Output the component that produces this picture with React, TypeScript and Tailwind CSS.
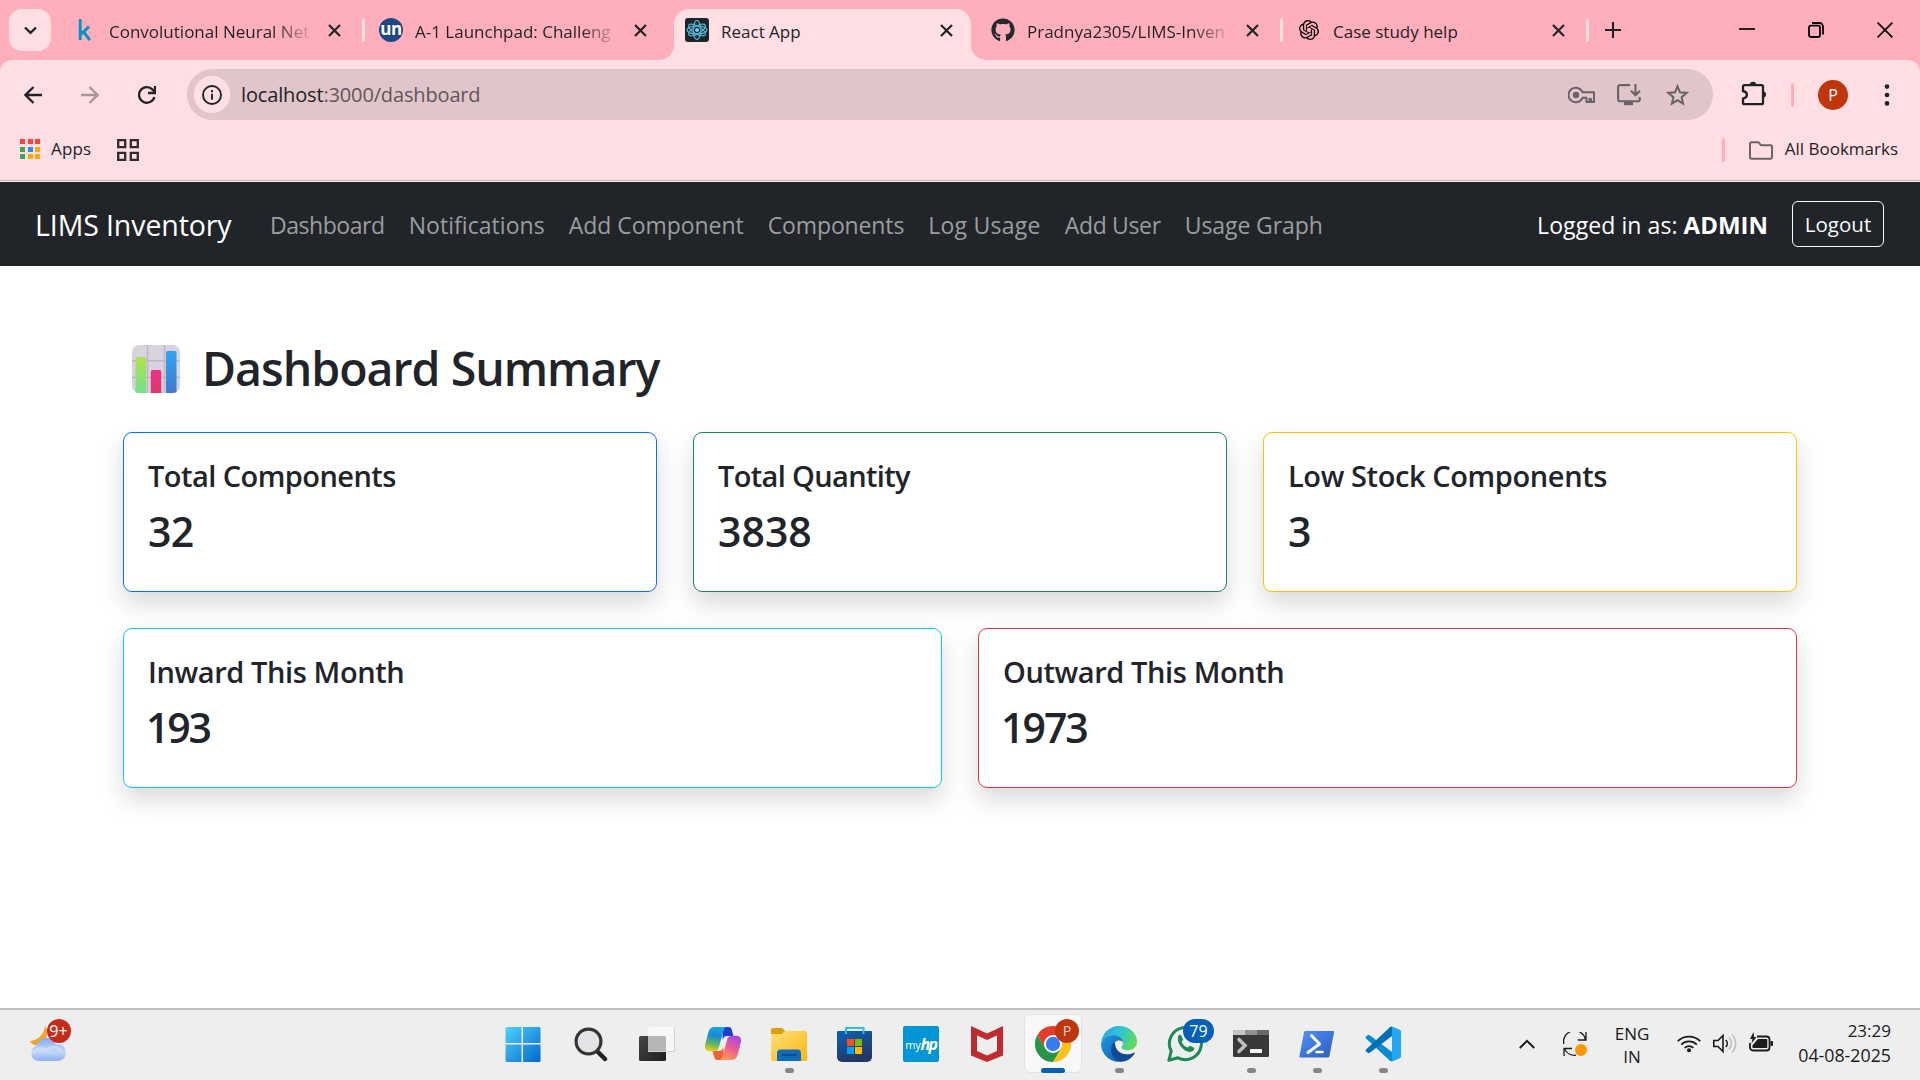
import React from "react";
import type { ReactNode } from "react";
import { FaGithub } from "react-icons/fa";
import { SiOpenai } from "react-icons/si";

/* ---------- Browser tabs ---------- */

function CloseIcon() {
  return (
    <svg className="h-[13px] w-[13px]" viewBox="0 0 13 13" stroke="#1f2326" strokeWidth="2.2">
      <path d="M1 1l11 11M12 1L1 12" />
    </svg>
  );
}

function KaggleIcon() {
  return (
    <svg className="h-6 w-6" viewBox="0 0 24 24" fill="none" stroke="#0a93c4" strokeWidth="3">
      <path d="M7.200 1v21M16 8.600l-7.600 7.200M10.400 13.600l6.400 8.400" />
    </svg>
  );
}

function UnIcon() {
  return (
    <span className="flex h-6 w-6 items-center justify-center rounded-full bg-[#1d4882] pb-[3px] font-['Open_Sans',sans-serif] text-[17px] leading-none font-bold tracking-[-0.5px] text-white">
      un
    </span>
  );
}

function ReactIcon() {
  return (
    <svg className="h-6 w-6" viewBox="0 0 24 24" fill="none" stroke="#4fb8d3" strokeWidth="1.2">
      <rect width="24" height="24" rx="3" fill="#20232a" stroke="none" />
      <g transform="rotate(90 12 12)">
        <ellipse cx="12" cy="12" rx="9.600" ry="3.800" />
        <ellipse cx="12" cy="12" rx="9.600" ry="3.800" transform="rotate(60 12 12)" />
        <ellipse cx="12" cy="12" rx="9.600" ry="3.800" transform="rotate(120 12 12)" />
      </g>
      <ellipse cx="12" cy="12" rx="10" ry="4" />
      <circle cx="12" cy="12" r="2" fill="#61dafb" stroke="none" />
    </svg>
  );
}

type TabProps = { icon: ReactNode; title: string; active?: boolean; divider?: boolean; fade?: boolean };

function Tab({ icon, title, active, divider, fade }: TabProps) {
  return (
    <div className="relative flex w-[306px] shrink-0">
      <div
        className={
          active
            ? "relative flex h-[51px] w-[297px] items-center rounded-t-[15px] bg-[#ffdee4] pb-[9px] pl-[11px]"
            : "relative flex h-[51px] w-[297px] items-center pb-[9px] pl-[11px]"
        }
      >
        {icon}
        <div
          className={
            "mt-[3px] ml-[12px] h-6 w-[203px] text-[17px] leading-6 whitespace-nowrap text-[#1f2326] " +
            (fade ? "[mask-image:linear-gradient(to_right,black_165px,transparent_205px)]" : "")
          }
        >
          {title}
        </div>
        <div className="ml-[16px]">
          <CloseIcon />
        </div>
        {active && (
          <>
            <svg className="absolute bottom-0 left-[-15px] h-[15px] w-[15px]" viewBox="0 0 15 15">
              <path d="M15 0v15H0A15 15 0 0 0 15 0z" fill="#ffdee4" />
            </svg>
            <svg className="absolute right-[-15px] bottom-0 h-[15px] w-[15px]" viewBox="0 0 15 15">
              <path d="M0 0v15h15A15 15 0 0 1 0 0z" fill="#ffdee4" />
            </svg>
          </>
        )}
      </div>
      {divider && <div className="mt-[9px] ml-[3px] h-6 w-[3px] rounded-full bg-[#ffdee4]" />}
    </div>
  );
}

function TabStrip() {
  return (
    <div className="flex h-[60px] bg-[#ffaebc] pt-[9px]">
      <div className="mr-[11px] ml-[9px] flex h-[42px] w-[42px] items-center justify-center rounded-[13px] bg-[#ffdee4]">
        <svg className="h-[9px] w-[13px]" viewBox="0 0 13 9" fill="none" stroke="#1f2326" strokeWidth="2.3">
          <path d="M1 1.5l5.5 5.3L12 1.5" />
        </svg>
      </div>
      <Tab icon={<KaggleIcon />} title="Convolutional Neural Net" fade divider />
      <Tab icon={<UnIcon />} title="A-1 Launchpad: Challeng" fade />
      <Tab icon={<ReactIcon />} title="React App" active />
      <Tab icon={<FaGithub className="h-6 w-6 text-[#24292f]" />} title="Pradnya2305/LIMS-Inven" fade divider />
      <Tab icon={<SiOpenai className="mr-[2px] ml-[2px] h-[20px] w-[20px] text-black" />} title="Case study help" divider />
      <svg className="mt-[13px] ml-[13px] h-4 w-4" viewBox="0 0 16 16" stroke="#1f2326" strokeWidth="2.1">
        <path d="M8 0v16M0 8h16" />
      </svg>
      <div className="mt-[13px] mr-[27px] ml-auto flex items-start gap-[53px]">
        <svg className="h-4 w-4" viewBox="0 0 16 16" stroke="#000" strokeWidth="1.7">
          <path d="M0 7h16" />
        </svg>
        <svg className="h-4 w-4" viewBox="0 0 16 16" fill="none" stroke="#000" strokeWidth="1.8">
          <rect x="1" y="3.6" width="11" height="11.4" rx="2" />
          <path d="M4 1h7.500a3.500 3.500 0 0 1 3.500 3.500V12.500" />
        </svg>
        <svg className="h-4 w-4" viewBox="0 0 16 16" stroke="#000" strokeWidth="1.7">
          <path d="M.6.6l14.800 14.800M15.400.6L.6 15.400" />
        </svg>
      </div>
    </div>
  );
}

/* ---------- Address bar ---------- */

function Toolbar() {
  return (
    <div className="bg-[#ffaebc]">
      <div className="flex h-[60px] items-center rounded-t-[12px] bg-[#ffdee4] pt-[9px]">
        <svg className="ml-6 h-[18px] w-[18px]" viewBox="0 0 18 18" fill="none" stroke="#1f2326" strokeWidth="2.3">
          <path d="M18 9H2M9.500 1L1.500 9l8 8" />
        </svg>
        <svg className="ml-[39px] h-[18px] w-[18px]" viewBox="0 0 18 18" fill="none" stroke="#a8949a" strokeWidth="2.3">
          <path d="M0 9h16M8.500 1l8 8-8 8" />
        </svg>
        <svg className="ml-[39px] h-5 w-[18px]" viewBox="0 0 18 20" fill="none" stroke="#1f2326" strokeWidth="2.3">
          <path d="M16.400 12A7.800 7.800 0 1 1 14.600 4.600L17 7" />
          <path d="M17 1v7h-7" />
        </svg>
        <div className="ml-[31px] flex h-[51px] w-[1526px] items-center rounded-full bg-[#e0c5ca] pl-[7px]">
          <div className="flex h-[37px] w-9 items-center justify-center rounded-full bg-[#ffdee4]">
            <svg className="h-5 w-5" viewBox="0 0 20 20" fill="none" stroke="#1f2326" strokeWidth="1.9">
              <circle cx="10" cy="10" r="9" />
              <path d="M10 8.800v6M10 5v2.200" />
            </svg>
          </div>
          <div className="ml-[11px] text-[20px] leading-6 tracking-[-0.15px] text-[#62565a]">
            <span className="text-[#1f2326]">localhost</span>:3000/dashboard
          </div>
          <div className="mr-[24px] ml-auto flex items-center text-[#686366]">
            <svg className="h-[18px] w-[27px]" viewBox="0 0 27 18" fill="none" stroke="currentColor" strokeWidth="2">
              <path d="M14.500 6.200A7.300 7.300 0 1 0 14.500 11.800H18.500V16H21.500V13H23V16H26V6.200z" strokeLinejoin="round" />
              <circle cx="8" cy="9" r="3.200" fill="currentColor" stroke="none" />
            </svg>
            <svg className="ml-[22px] h-[22px] w-6" viewBox="0 0 24 22" fill="none" stroke="currentColor" strokeWidth="2.100">
              <path d="M13 1.100H3A1.900 1.900 0 0 0 1.100 3v12.400A1.900 1.900 0 0 0 3 17.300h17.800a1.900 1.900 0 0 0 1.900-1.900V13M18.500 0v10.500M14 6.800l4.500 4.500L23 6.800" />
              <path d="M7 18h9v3.200H7z" fill="currentColor" stroke="none" />
            </svg>
            <svg className="ml-[25px] h-[22px] w-[23px]" viewBox="0 0 23 22" fill="none" stroke="currentColor" strokeWidth="2">
              <path d="M11.500 2.300l2.500 6 6.600.6-5 4.300 1.500 6.500-5.600-3.500-5.600 3.500 1.500-6.500-5-4.300 6.600-.6z" />
            </svg>
          </div>
        </div>
        <svg className="mb-[2px] ml-[28px] h-[25px] w-[26px]" viewBox="0 0 26 25" fill="none" stroke="#1f2326" strokeWidth="2.300">
          <path d="M3.500 4.200h17a1.500 1.500 0 0 1 1.500 1.500v16a1.500 1.500 0 0 1-1.500 1.500h-17A1.500 1.500 0 0 1 2 21.700v-4.200c5.200-1.200 5.200-6.400 0-7.500V5.700a1.500 1.500 0 0 1 1.500-1.500z" />
          <path d="M8.800 4a3.200 3.200 0 0 1 6.400 0zM22 10.500a3 3 0 0 1 0 6z" fill="#1f2326" stroke="none" />
        </svg>
        <div className="ml-[24px] h-6 w-[3px] rounded-full bg-[#ffaebc]" />
        <div className="ml-6 flex h-[30px] w-[30px] items-center justify-center rounded-full bg-[#bf360c] text-[16px] text-white">P</div>
        <svg className="ml-[36px] h-[22px] w-[6px]" viewBox="0 0 6 22" fill="#1f2326">
          <circle cx="3" cy="2.600" r="2.300" />
          <circle cx="3" cy="11" r="2.300" />
          <circle cx="3" cy="19.400" r="2.300" />
        </svg>
      </div>
    </div>
  );
}

const appDots = [
  "bg-[#ff4336]", "bg-[#ff4336]", "bg-[#ff4336]",
  "bg-[#3aa757]", "bg-[#2a8af6]", "bg-[#f9ab00]",
  "bg-[#3aa757]", "bg-[#f9ab00]", "bg-[#f9ab00]",
];

function BookmarksBar() {
  return (
    <div className="flex h-[62px] items-center border-b border-[#ffe9ed] bg-[#ffdee4] text-[17px] text-[#1f2326] shadow-[inset_0_-1px_0_#cdb3b9]">
      <div className="ml-5 grid grid-cols-3 gap-[2.500px] pb-[3px]">
        {appDots.map((c, i) => (
          <span key={i} className={"h-[5px] w-[5px] " + c} />
        ))}
      </div>
      <span className="ml-[11px] pb-[3px] tracking-[0.15px]">Apps</span>
      <svg className="mb-px ml-[26px] h-[22px] w-[22px]" viewBox="0 0 22 22" fill="none" stroke="#33292e" strokeWidth="2.300">
        <path d="M1.200 1.200h7v7h-7zM13.800 1.200h7v7h-7zM1.200 13.800h7v7h-7zM13.800 13.800h7v7h-7z" />
      </svg>
      <div className="mb-[1px] ml-auto h-6 w-[3px] rounded-full bg-[#ffaebc]" />
      <svg className="mb-[1px] ml-[24px] h-[19px] w-6" viewBox="0 0 24 19" fill="none" stroke="#6b6367" strokeWidth="2">
        <path d="M1 16V2.700A1.500 1.500 0 0 1 2.500 1.200h6.800l2.700 3h9.500A1.500 1.500 0 0 1 23 5.700V16a1.700 1.700 0 0 1-1.700 1.700H2.700A1.700 1.700 0 0 1 1 16z" />
      </svg>
      <span className="mr-[22px] ml-[12px] pb-[3px]">All Bookmarks</span>
    </div>
  );
}

/* ---------- Page ---------- */

const links: [string, string][] = [
  ["Dashboard", "tracking-[-0.45px]"],
  ["Notifications", "tracking-[0.05px]"],
  ["Add Component", "tracking-[-0.04px]"],
  ["Components", "tracking-[-0.13px]"],
  ["Log Usage", "tracking-[0.25px]"],
  ["Add User", "tracking-[-0.33px]"],
  ["Usage Graph", "tracking-[-0.1px]"],
];

function Navbar() {
  return (
    <nav className="flex h-[84px] items-center bg-[#212529] pr-9 pl-[34px] text-white">
      <span className="mt-[2px] w-[236px] pl-px text-[28.5px] leading-9 tracking-[-0.1px] whitespace-nowrap">LIMS Inventory</span>
      <div className="mt-[2px] flex gap-6 text-[23px] leading-9 whitespace-nowrap text-[#9b9d9f]">
        {links.map(([label, tracking]) => (
          <span key={label} className={tracking}>{label}</span>
        ))}
      </div>
      <div className="mt-[2px] mr-6 ml-auto flex items-baseline gap-[6px] whitespace-nowrap">
        <span className="text-[23px] leading-9 tracking-[0.08px]">Logged in as:</span>
        <span className="text-[24px] leading-9 font-bold">ADMIN</span>
      </div>
      <div className="flex h-[46px] w-[92px] items-center justify-center rounded-[6px] border border-[#f8f9fa] pt-px text-[20.5px] text-[#f8f9fa]">
        Logout
      </div>
    </nav>
  );
}

function ChartEmoji() {
  return (
    <svg className="mt-[2px] h-12 w-12" viewBox="0 0 48 48">
      <defs>
        <clipPath id="chart-clip"><rect width="48" height="48" rx="7" /></clipPath>
        <linearGradient id="chart-g" x1="0" y1="0" x2="0" y2="1">
          <stop offset="0" stopColor="#b4e04f" /><stop offset="1" stopColor="#67e48f" />
        </linearGradient>
        <linearGradient id="chart-r" x1="0" y1="0" x2="0" y2="1">
          <stop offset="0" stopColor="#f0308a" /><stop offset="1" stopColor="#d93a66" />
        </linearGradient>
        <linearGradient id="chart-b" x1="0" y1="0" x2="0" y2="1">
          <stop offset="0" stopColor="#2fa4f2" /><stop offset="1" stopColor="#4677cd" />
        </linearGradient>
      </defs>
      <g clipPath="url(#chart-clip)">
        <rect width="48" height="48" fill="#d8d3df" />
        <path d="M15.500 0v48M32.500 0v48M0 15.800h48M0 32.500h48" stroke="#bdb8c6" strokeWidth="1.600" />
        <rect x="3.500" y="12" width="10.500" height="40" rx="1.800" fill="url(#chart-g)" />
        <rect x="18.800" y="25" width="10.500" height="27" rx="1.800" fill="url(#chart-r)" />
        <rect x="34" y="6" width="10.500" height="46" rx="1.800" fill="url(#chart-b)" />
      </g>
    </svg>
  );
}

type CardProps = { title: string; value: string; border: string; titleTracking: string; valueClass?: string };

function StatCard({ title, value, border, titleTracking, valueClass = "" }: CardProps) {
  return (
    <div className={"h-40 rounded-[9px] border bg-white pt-[25px] pl-6 text-[#212529] shadow-[0_12px_24px_rgba(0,0,0,0.15)] " + border}>
      <div className={"text-[29px] leading-[36px] font-semibold whitespace-nowrap " + titleTracking}>{title}</div>
      <div className={"mt-[12px] text-[41px] leading-[50px] font-semibold " + valueClass}>{value}</div>
    </div>
  );
}

function Dashboard() {
  return (
    <main className="flex-1 px-[123px] pt-[73px]">
      <div className="mb-[35px] flex h-[58px] items-center pl-[9px]">
        <ChartEmoji />
        <h2 className="ml-[22px] text-[46.5px] leading-[58px] font-semibold tracking-[-1px] text-[#212529]">Dashboard Summary</h2>
      </div>
      <div className="grid grid-cols-3 gap-9">
        <StatCard title="Total Components" value="32" border="border-[#0d6efd]" titleTracking="tracking-[-0.55px]" valueClass="tracking-[-0.6px]" />
        <StatCard title="Total Quantity" value="3838" border="border-[#198754]" titleTracking="tracking-[-0.65px]" />
        <StatCard title="Low Stock Components" value="3" border="border-[#ffc107]" titleTracking="tracking-[-0.4px]" />
      </div>
      <div className="mt-9 grid grid-cols-2 gap-9">
        <StatCard title="Inward This Month" value="193" border="border-[#0dcaf0]" titleTracking="tracking-[-0.4px]" valueClass="-ml-[2px] tracking-[-2.2px]" />
        <StatCard title="Outward This Month" value="1973" border="border-[#dc3545]" titleTracking="tracking-[-0.4px]" valueClass="-ml-[2px] tracking-[-2px]" />
      </div>
    </main>
  );
}

/* ---------- Taskbar ---------- */

function WindowsIcon() {
  return (
    <svg className="h-9 w-9 -translate-x-[2px]" viewBox="0 0 36 36">
      <defs>
        <linearGradient id="win" x1="0" y1="0" x2="1" y2="1">
          <stop offset="0" stopColor="#50d2ff" /><stop offset="1" stopColor="#0067cb" />
        </linearGradient>
      </defs>
      <path d="M2 1H16.500V17H.5V2.500A1.500 1.500 0 0 1 2 1zM18 1h16a1.500 1.500 0 0 1 1.500 1.500V17H18zM.5 18.500h16V36H2A1.500 1.500 0 0 1 .5 34.500zM18 18.500h17.500v16A1.500 1.500 0 0 1 34 36H18z" fill="url(#win)" />
    </svg>
  );
}

function SearchIcon() {
  return (
    <svg className="h-9 w-9 -translate-x-[1px]" viewBox="0 0 36 36">
      <path d="M25.500 25.500l7.500 7.500" stroke="#222" strokeWidth="4.500" strokeLinecap="round" />
      <circle cx="16.500" cy="15.500" r="12.400" fill="#e3e4e7" stroke="#343434" strokeWidth="3.200" />
    </svg>
  );
}

function TaskViewIcon() {
  return (
    <svg className="h-9 w-9" viewBox="0 0 36 36">
      <defs>
        <linearGradient id="tv" x1="0" y1="0" x2="1" y2="1">
          <stop offset="0" stopColor="#484848" /><stop offset="1" stopColor="#1c1c1c" />
        </linearGradient>
      </defs>
      <rect x="0" y="10" width="27" height="25" rx="1.500" fill="url(#tv)" />
      <rect x="9" y="1" width="27" height="25" rx="1.500" fill="#f7f7f7" />
      <path d="M9 10h16.500a1.500 1.500 0 0 1 1.500 1.500V25H9z" fill="#b5b5b5" />
      <path d="M9 25.500h26.500V2" fill="none" stroke="#d2d2d2" />
    </svg>
  );
}

function CopilotIcon() {
  return (
    <svg className="h-9 w-9" viewBox="0 0 36 36">
      <defs>
        <linearGradient id="cp1" x1="0.500" y1="0" x2="0.300" y2="1">
          <stop offset="0" stopColor="#1ba7e6" /><stop offset=".35" stopColor="#1689d8" />
          <stop offset=".7" stopColor="#5eb660" /><stop offset="1" stopColor="#f2cf10" />
        </linearGradient>
        <linearGradient id="cp2" x1="0.700" y1="0" x2="0.300" y2="1">
          <stop offset="0" stopColor="#a948e8" /><stop offset=".5" stopColor="#ec5d90" /><stop offset="1" stopColor="#ff9b55" />
        </linearGradient>
      </defs>
      <path d="M17 1h6.500c2 0 2.800 1.200 3.300 3l1.700 6H22c-2.500 0-3.500 1.500-4.200 4z" fill="#1d3fd0" />
      <path d="M19 34h-6.500c-2 0-2.800-1.200-3.300-3l-1.700-6H14c2.500 0 3.500-1.500 4.200-4z" fill="#f4603a" />
      <path d="M9.500 1H22c-2 0-3 1.800-3.600 4l-4.600 16.500c-.8 2.500-2 3.700-4.500 3.700H4.500C.8 25.200-.8 22.500.2 18.500L3.500 6c1-3.300 2.800-5 6-5z" fill="url(#cp1)" />
      <path d="M26.500 34H14c2 0 3-1.800 3.600-4l4.600-16.500c.8-2.500 2-3.700 4.500-3.700h4.800c3.700 0 5.300 2.700 4.300 6.700L32.500 29c-1 3.300-2.800 5-6 5z" fill="url(#cp2)" />
    </svg>
  );
}

function ExplorerIcon() {
  return (
    <svg className="h-9 w-9" viewBox="0 0 36 36">
      <defs>
        <linearGradient id="ex" x1="0" y1="0" x2="1" y2="1">
          <stop offset="0" stopColor="#ffdf7a" /><stop offset="1" stopColor="#f9b810" />
        </linearGradient>
      </defs>
      <path d="M0 3.500A1.500 1.500 0 0 1 1.500 2H11l4 3.500-4 4H0z" fill="#dfa005" />
      <path d="M0 8h10.500L14 5h20.500A1.500 1.500 0 0 1 36 6.500V33.500A1.500 1.500 0 0 1 34.500 35H1.500A1.500 1.500 0 0 1 0 33.500z" fill="url(#ex)" />
      <path d="M6 35V27a3.500 3.500 0 0 1 3.500-3.500h17A3.500 3.500 0 0 1 30 27v8z" fill="#0f6cbd" />
      <path d="M10.500 29h15" stroke="#0a4a8a" strokeWidth="1.800" />
    </svg>
  );
}

function StoreIcon() {
  return (
    <svg className="h-9 w-9" viewBox="0 0 36 36">
      <defs>
        <linearGradient id="st" x1="0" y1="0" x2=".4" y2="1">
          <stop offset="0" stopColor="#0a62b8" /><stop offset="1" stopColor="#243763" />
        </linearGradient>
      </defs>
      <path d="M0 6a1 1 0 0 1 1-1h33a1 1 0 0 1 1 1v25a5 5 0 0 1-5 5H5a5 5 0 0 1-5-5z" fill="url(#st)" />
      <path d="M9 8V2h17.500v6" fill="none" stroke="#27bdf2" strokeWidth="2" />
      <path d="M10 13h7v7h-7z" fill="#f25022" />
      <path d="M18 13h7v7h-7z" fill="#7fba00" />
      <path d="M10 21h7v7h-7z" fill="#00a4ef" />
      <path d="M18 21h7v7h-7z" fill="#ffb900" />
    </svg>
  );
}

function MyHpIcon() {
  return (
    <div className="flex h-9 w-9 items-center justify-center rounded-[2px] bg-[#0396d6] font-['Open_Sans',sans-serif] leading-none text-white">
      <span className="text-[11px] tracking-[-0.3px]">my</span>
      <span className="text-[16px] font-bold tracking-[-1.5px] italic">hp</span>
    </div>
  );
}

function McAfeeIcon() {
  return (
    <svg className="h-9 w-9" viewBox="0 0 36 36">
      <path fillRule="evenodd" d="M2 0l16 7.500L34 0v29.500L18 36 2 29.500zM8 9.500V25l10 4.500L28 25V9.500L18 14z" fill="#c12a2e" />
    </svg>
  );
}

function ChromeIcon() {
  return (
    <svg className="h-9 w-9" viewBox="0 0 36 36">
      <path d="M18 9h15.600A18 18 0 0 1 18 36l7.800-13.500z" fill="#fcc21b" />
      <path d="M2.400 9A18 18 0 0 1 33.600 9H18L10.200 22.500z" fill="#e33b2e" />
      <path d="M10.200 22.500L2.400 9A18 18 0 0 0 18 36l7.800-13.500z" fill="#269547" />
      <circle cx="18" cy="18" r="9" fill="#fff" />
      <circle cx="18" cy="18" r="7.200" fill="#3a7cf0" />
    </svg>
  );
}

function EdgeIcon() {
  return (
    <svg className="h-9 w-9" viewBox="0 0 36 36">
      <defs>
        <linearGradient id="ed1" x1="0" y1=".3" x2="1" y2=".6">
          <stop offset="0" stopColor="#2aa5e8" /><stop offset=".5" stopColor="#2fc6cf" /><stop offset="1" stopColor="#62dd50" />
        </linearGradient>
        <linearGradient id="ed2" x1="0" y1="0" x2="1" y2="1">
          <stop offset="0" stopColor="#1d9be4" /><stop offset="1" stopColor="#0f59ac" />
        </linearGradient>
      </defs>
      <path d="M0 18C.5 7.500 8.500 0 18 0c10.500 0 18 7.800 18 15.500 0 5.500-4 8.700-9 8.700-4.200 0-6.500-1.500-6.500-2.800 0-.9 1.500-1.600 1.500-4.600 0-4-4-7.800-10-7.800C5.500 9 1 13 0 18z" fill="url(#ed1)" />
      <path d="M0 18C1 13 5.500 9 12 9c6 0 10 3.600 10 7.600-1-2-3-2.600-5-2-4 1.200-6 5-5.500 9.400.6 6 5 10.600 10.500 11.400A18 18 0 0 1 0 18z" fill="url(#ed2)" />
      <path d="M14 15.800c-4 3-4.800 8.200-3 12.700 2 4.700 6 7.300 11 7 4.500-.5 9-3.800 11.500-7.800.5-.9-.3-1.400-1-1-8 4-19 .5-18.500-10.900z" fill="#114a93" />
    </svg>
  );
}

function WhatsAppIcon() {
  return (
    <svg className="h-9 w-9" viewBox="0 0 36 36">
      <path d="M1.800 34.200l2.500-9A16 16 0 1 1 11 31.800z" fill="none" stroke="#1d8a56" strokeWidth="3" strokeLinejoin="round" />
      <path d="M11.500 9.500c1-1 2.400-.8 3 .4l1.500 3.300c.3.900-1.400 2.300-1.200 3 1 2.500 3.200 4.400 5.600 5.300.8.200 2-1.900 3-1.500l3.200 1.600c1 .6.800 2-.2 3-5.500 5.400-18.500-6.500-14.900-15.100z" fill="#1d8a56" />
    </svg>
  );
}

function TerminalIcon() {
  return (
    <svg className="h-9 w-9" viewBox="0 0 36 36">
      <rect y="4" width="36" height="27" rx="1.500" fill="#383838" />
      <path d="M0 9V5.500A1.500 1.500 0 0 1 1.500 4H12v5z" fill="#c5c5c5" />
      <path d="M12 4h12v5H12z" fill="#929292" />
      <path d="M24 4h10.500A1.500 1.500 0 0 1 36 5.500V9H24z" fill="#686868" />
      <path d="M6 13.500l6 6-6 6" fill="none" stroke="#bdbdbd" strokeWidth="3.600" strokeLinecap="round" />
      <rect x="17" y="23" width="12" height="4" rx=".6" fill="#f2f2f2" />
    </svg>
  );
}

function PowerShellIcon() {
  return (
    <svg className="h-9 w-9" viewBox="0 0 36 36">
      <defs>
        <linearGradient id="ps" x1="0" y1="0" x2="1" y2="1">
          <stop offset="0" stopColor="#5391f8" /><stop offset="1" stopColor="#2a5bbd" />
        </linearGradient>
      </defs>
      <path d="M6.500 5H34a1 1 0 0 1 1 1.300l-4.600 24a1.600 1.600 0 0 1-1.500 1.200H1.500A1 1 0 0 1 .5 30L5 6.200A1.600 1.600 0 0 1 6.500 5z" fill="url(#ps)" />
      <path d="M12.500 9.500l8 8.500L9 26.500" fill="none" stroke="#fff" strokeWidth="3" strokeLinecap="round" strokeLinejoin="round" />
      <path d="M17.500 26h6" stroke="#fff" strokeWidth="2.600" strokeLinecap="round" />
    </svg>
  );
}

function VsCodeIcon() {
  return (
    <svg className="h-9 w-9" viewBox="0 0 36 36">
      <path d="M1 12.500a1.500 1.500 0 0 1 0-2l1.700-1.200a1.600 1.600 0 0 1 2 0L27 26v8.500c0 1-1 1.300-1.800.6z" fill="#0b8ad4" />
      <path d="M1 23.500a1.500 1.500 0 0 0 0 2l1.700 1.200a1.600 1.600 0 0 0 2 0L27 10V1.500C27 .5 26 .2 25.200.9z" fill="#0470b4" />
      <path d="M26 0l8.700 3.700c.8.400 1.300 1 1.300 2v24.600c0 1-.5 1.600-1.300 2L26 36c1 0 1-1 1-2V2c0-1 0-2-1-2z" fill="#25a6f2" />
    </svg>
  );
}

type AppProps = { children: ReactNode; running?: boolean };

function TaskbarApp({ children, running }: AppProps) {
  return (
    <div className="relative flex w-[66px] shrink-0 justify-center pt-4">
      {children}
      {running && <div className="absolute top-[58px] left-[28.500px] h-[5px] w-[9px] rounded-full bg-[#868686]" />}
    </div>
  );
}

function WeatherWidget() {
  return (
    <div className="relative mt-4 ml-[30px] h-9 w-[42px]">
      <svg className="h-9 w-9" viewBox="0 0 36 36">
        <defs>
          <linearGradient id="cloud" x1="0" y1="0" x2="0" y2="1">
            <stop offset="0" stopColor="#86aaeb" /><stop offset=".6" stopColor="#c3d8f7" /><stop offset="1" stopColor="#8db0f0" />
          </linearGradient>
        </defs>
        <path d="M15 0c5 7 1 19-9 19-3 0-5-2-6-4 8-1 14-6 15-15z" fill="#f3a325" />
        <path d="M8 35a8 8 0 0 1-1-15.500C8 14.500 12 12 16.500 12c4.500 0 8 2.500 9 6.500C32 17.500 36 22 36 26.500S32.500 35 28 35z" fill="url(#cloud)" />
        <path d="M3 27c3-4 8-6 14-3 4-4 10-4 13 0" fill="none" stroke="#d3e3fb" strokeWidth="3" opacity=".7" />
      </svg>
      <div className="absolute top-[-7.500px] left-[16.500px] flex h-6 w-6 items-center justify-center rounded-full bg-[#c42b1c] text-[16px] leading-none text-white">
        9+
      </div>
    </div>
  );
}

function Tray() {
  return (
    <div className="ml-auto flex pr-[29px] text-[#1b1b1b]">
      <svg className="mt-[29px] h-[10px] w-4" viewBox="0 0 16 10" fill="none" stroke="currentColor" strokeWidth="2">
        <path d="M.8 9L8 1.800 15.200 9" />
      </svg>
      <svg className="mt-[22px] ml-7 h-6 w-6" viewBox="0 0 24 24" fill="none" stroke="#1b1b1b" strokeWidth="1.300">
        <path d="M.8 12A11 11 0 0 1 22.500 7.500M23 0v8h-8M1 24v-7.500h8M1.500 17A11 11 0 0 0 13 23.200" />
        <circle cx="18" cy="18" r="6" fill="#ff9800" stroke="none" />
      </svg>
      <div className="mt-[12px] ml-[24px] flex w-[42px] flex-col items-center text-[17px] leading-[23px]">
        <span>ENG</span>
        <span>IN</span>
      </div>
      <svg className="mt-[24px] ml-[24px] h-[19px] w-6" viewBox="0 0 24 19" fill="none" stroke="currentColor" strokeWidth="1.700">
        <path d="M.7 7.200a16 16 0 0 1 22.600 0M4.200 10.700a11 11 0 0 1 15.600 0M7.600 13.900a6.300 6.300 0 0 1 8.800 0" />
        <circle cx="12" cy="16.200" r="2" fill="currentColor" stroke="none" />
      </svg>
      <svg className="mt-[23px] ml-3 h-[21px] w-6" viewBox="0 0 24 21" fill="none" stroke="currentColor" strokeWidth="1.600">
        <path d="M.8 7.500h4.200l5-5v16l-5-5H.8zM12.800 7a5 5 0 0 1 0 7" />
        <path d="M16 4.500a9 9 0 0 1 0 12M19 1.500a13 13 0 0 1 0 18" stroke="#bdbdbd" />
      </svg>
      <svg className="mt-[22px] ml-3 h-[21px] w-6" viewBox="0 0 24 21" fill="none" stroke="currentColor" strokeWidth="1.800">
        <path d="M8 4.500h9.500A3 3 0 0 1 20.500 7.500v8a3 3 0 0 1-3 3H4a3 3 0 0 1-3-3V11" />
        <path d="M9 7h8.500a.8.800 0 0 1 .8.800v7.400a.8.800 0 0 1-.8.800H4.200a.8.800 0 0 1-.8-.8V13.500zM21.500 9H23a1 1 0 0 1 1 1v3a1 1 0 0 1-1 1h-1.500zM4.500 0L1 7h2.500L2.500 11.500 7.500 5H5z" fill="currentColor" stroke="none" />
      </svg>
      <div className="mt-[9px] ml-[24px] w-[94px] text-right text-[17px] leading-[24px] whitespace-nowrap">
        <div>23:29</div>
        <div className="text-[17.800px]">04-08-2025</div>
      </div>
    </div>
  );
}

function Taskbar() {
  return (
    <div className="flex h-[72px] border-t-2 border-[#bdbdbd] bg-[#eeeeee]">
      <div className="flex w-[492px] shrink-0">
        <WeatherWidget />
      </div>
      <TaskbarApp><WindowsIcon /></TaskbarApp>
      <TaskbarApp><SearchIcon /></TaskbarApp>
      <TaskbarApp><TaskViewIcon /></TaskbarApp>
      <TaskbarApp><CopilotIcon /></TaskbarApp>
      <TaskbarApp running><ExplorerIcon /></TaskbarApp>
      <TaskbarApp><StoreIcon /></TaskbarApp>
      <TaskbarApp><MyHpIcon /></TaskbarApp>
      <TaskbarApp><McAfeeIcon /></TaskbarApp>
      <div className="relative flex w-[66px] shrink-0 justify-center pt-1">
        <div className="flex h-[59px] w-[58px] justify-center rounded-[6px] border border-[#e3e3e3] bg-[#f8f8f8] pt-[11px]">
          <ChromeIcon />
        </div>
        <div className="absolute top-[9px] left-[35px] flex h-6 w-6 items-center justify-center rounded-full bg-[#bf360c] text-[14px] leading-none text-[#ffd9cc]">
          P
        </div>
        <div className="absolute top-[58px] left-[21px] h-[5px] w-6 rounded-full bg-[#0560b6]" />
      </div>
      <TaskbarApp running><EdgeIcon /></TaskbarApp>
      <TaskbarApp>
        <WhatsAppIcon />
        <div className="absolute top-[9px] left-[31px] flex h-6 w-[31px] items-center justify-center rounded-full bg-[#0560b6] text-[16px] leading-none text-white">
          79
        </div>
      </TaskbarApp>
      <TaskbarApp running><TerminalIcon /></TaskbarApp>
      <TaskbarApp running><PowerShellIcon /></TaskbarApp>
      <TaskbarApp running><VsCodeIcon /></TaskbarApp>
      <Tray />
    </div>
  );
}

export default function App() {
  return (
    <div className="flex h-[1080px] w-[1920px] flex-col overflow-hidden bg-white font-['Open_Sans',sans-serif]">
      <TabStrip />
      <Toolbar />
      <BookmarksBar />
      <Navbar />
      <Dashboard />
      <Taskbar />
    </div>
  );
}
